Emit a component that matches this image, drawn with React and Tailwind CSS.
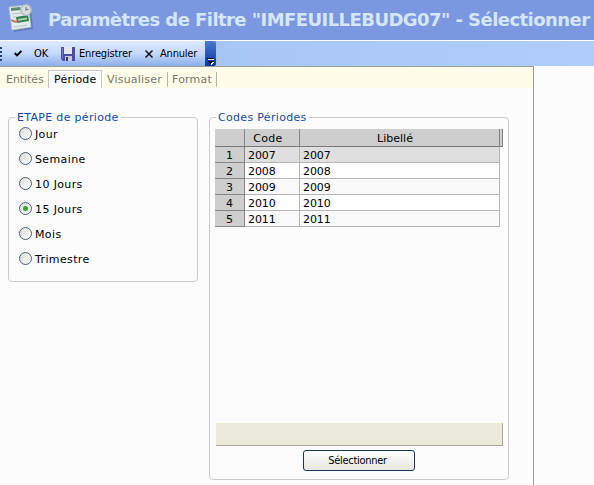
const PERIODS = ['2007', '2008', '2009', '2010', '2011'];
const STEPS = ['Jour', 'Semaine', '10 Jours', '15 Jours', 'Mois', 'Trimestre'];

function AppIcon() {
  return (
    <svg width="28" height="32" viewBox="0 0 28 32" className="ml-[7px] mt-[2px] shrink-0">
      <path d="M3 7L24 5L26 27L7 30Z" fill="#5268a5" opacity="0.6" />
      <path d="M2 5L21 3L24 25L5 28Z" fill="#e4eee8" stroke="#b5c4cc" strokeWidth="0.8" />
      <path d="M4 6L13 5L14 8L4 9Z" fill="#5b8a78" />
      <path d="M5 12L15 11M6 15H9M6 18H9M7 25L20 23" stroke="#b2c2c4" strokeWidth="1.1" />
      <path d="M9 15L21 13L22 19L10 21Z" fill="#2f7f50" />
      <path d="M11 17L20 15.5V17.500L11 19Z" fill="#a9d4a8" />
      <path d="M4 18L8 20L12 19" fill="none" stroke="#b86c62" strokeWidth="1.4" />
      <circle cx="19" cy="8" r="5.2" fill="#d7dfe4" stroke="#b4bbc4" strokeWidth="1.5" />
      <path d="M19 5V8L21.500 7" fill="none" stroke="#69747e" strokeWidth="1.1" />
    </svg>
  );
}

function SaveIcon() {
  return (
    <svg width="14" height="14" viewBox="0 0 14 14" className="shrink-0">
      <path d="M0 0H14V14H2L0 12Z" fill="#4b4ba5" />
      <path d="M1 1H2V12H1Z" fill="#7779c9" />
      <path d="M3 0H11V7H3Z" fill="#e1e6f5" />
      <path d="M4 9H11V14H4Z" fill="#c5cbdf" />
      <path d="M5 10H7V14H5Z" fill="#343777" />
    </svg>
  );
}

function Toolbar() {
  return (
    <div className="flex h-[25px] bg-gradient-to-r from-[#a4c2f3] to-[#b0cdf9]">
      <div className="flex h-[25px] w-[205px] shrink-0 items-center bg-gradient-to-b from-[#dce9fd] via-[#c4d9fb] to-[#8caee9] font-['DejaVu_Sans_Condensed','DejaVu_Sans',sans-serif] text-[11px] text-black">
        <div className="flex w-[3px] flex-col gap-[2px]">
          <i className="h-[2px] w-[2px] bg-[#27437c]" />
          <i className="h-[2px] w-[2px] bg-[#27437c]" />
          <i className="h-[2px] w-[2px] bg-[#27437c]" />
          <i className="h-[2px] w-[2px] bg-[#27437c]" />
        </div>
        <svg width="8" height="7" viewBox="0 0 8 7" className="ml-[11px] shrink-0">
          <path d="M0.7 3L3 5.4L7.4 1" fill="none" stroke="#000" strokeWidth="1.9" />
        </svg>
        <span className="ml-[12px] w-[27px] pt-[2px] tracking-[-0.1px]">OK</span>
        <SaveIcon />
        <span className="ml-[4px] w-[66px] whitespace-nowrap pt-[2px] tracking-[-0.15px]">Enregistrer</span>
        <svg width="8" height="8" viewBox="0 0 8 8" className="mt-px shrink-0">
          <path d="M0.500 0.500L7.500 7.500M7.500 0.500L0.500 7.500" stroke="#111" strokeWidth="1.5" />
        </svg>
        <span className="ml-[7px] pt-[2px] tracking-[-0.2px]">Annuler</span>
      </div>
      <div className="flex h-[25px] w-[11px] items-end justify-center rounded-r-[2px] bg-gradient-to-b from-[#4b7bcf] to-[#07359a]">
        <svg width="7" height="8" viewBox="0 0 7 8" className="mb-[1px]" shapeRendering="crispEdges">
          <path d="M1 2H7V3H1ZM1 5H7L4 8Z" fill="#fff" />
          <path d="M0 1H6V2H0ZM0 4H6L3 7Z" fill="#000" />
        </svg>
      </div>
    </div>
  );
}

function Tabs() {
  return (
    <div className="flex h-[21px] items-start bg-[#fffde9] pt-[3px] text-[11px] leading-[18px] text-[#77776d]">
      <span className="w-[48px] whitespace-nowrap pl-[6px] pt-px tracking-[-0.05px]">Entités</span>
      <span className="h-[18px] w-[54px] whitespace-nowrap border border-b-0 border-[#c8c8c0] bg-[#fcfcfc] pl-[5px] text-black leading-[17px] tracking-[0.2px]">Période</span>
      <span className="w-[65px] whitespace-nowrap pl-[5px] pt-px tracking-[0.2px]">Visualiser</span>
      <span className="mt-[2px] h-[15px] w-px bg-[#b5b5a4]" />
      <span className="w-[48px] whitespace-nowrap pl-[4px] pt-px tracking-[0.2px]">Format</span>
      <span className="mt-[2px] h-[15px] w-px bg-[#b5b5a4]" />
    </div>
  );
}

function Radio({ label, checked }) {
  return (
    <label className="flex h-[25px] items-center text-[11px] leading-[14px]">
      <span className="flex h-[13px] w-[13px] items-center justify-center rounded-full border border-[#42627f] bg-gradient-to-br from-[#dcdcd5] to-white">
        {checked && <i className="h-[5px] w-[5px] rounded-full bg-[#35a335]" />}
      </span>
      <span className="ml-[3px] pt-[2px] tracking-[0.38px]">{label}</span>
    </label>
  );
}

function Group({ title, className, children }) {
  return (
    <section className={'rounded-[4px] border border-[#cbcbc8] ' + className}>
      <h2 className="-mt-[8px] ml-[6px] h-[14px] w-fit whitespace-nowrap bg-[#fcfcfc] px-[2px] text-[11px] leading-[15px] tracking-[0.32px] text-[#144a9d]">
        {title}
      </h2>
      {children}
    </section>
  );
}

function PeriodTable() {
  return (
    <div className="ml-[5px] mt-[5px] w-[288px] text-[11px] text-black">
      <div className="flex h-[18px] border-b border-[#777] bg-[#cecece] leading-[19px]">
        <span className="w-[30px] border-r border-[#858585]" />
        <span className="w-[55px] border-r border-[#858585] pr-[8px] text-center tracking-[0.3px]">Code</span>
        <span className="w-[200px] border-r border-[#858585] pr-[9px] text-center">Libellé</span>
        <span className="w-[3px] border-r border-[#858585]" />
      </div>
      {PERIODS.map((p, i) => (
        <div
          key={p}
          className={
            'flex h-4 w-[285px] leading-[17px] tracking-[-0.1px] ' +
            (i === 0 ? 'bg-[#dfdfdf]' : i % 2 ? 'bg-white' : 'bg-[#fafafa]')
          }
        >
          <span className="w-[30px] border-b border-r border-[#858585] bg-[#cecece] text-center leading-[18px]">{i + 1}</span>
          <span className="w-[55px] border-b border-r border-[#b4b4b4] pl-[3px]">{p}</span>
          <span className="w-[200px] border-b border-r border-[#b4b4b4] pl-[3px]">{p}</span>
        </div>
      ))}
    </div>
  );
}

export default function App() {
  return (
    <div className="flex h-[485px] w-[594px] flex-col overflow-hidden bg-[#fcfcfc] font-['DejaVu_Sans',sans-serif] text-black">
      <header className="flex h-10 shrink-0 bg-[#7b97e0]">
        <AppIcon />
        <h1 className="ml-[13px] whitespace-nowrap text-[18px] font-bold leading-[39px] text-[#d5e6ff] tracking-[-0.56px]">
          Paramètres de Filtre "IMFEUILLEBUDG07" - Sélectionner
        </h1>
      </header>
      <div className="shrink-0 border-t border-white">
        <Toolbar />
      </div>
      <main className="h-[419px] w-[534px] border-r border-t border-[#9d9d99]">
        <Tabs />
        <div className="flex items-start gap-[11px] pl-[8px] pt-[29px]">
          <Group title="ETAPE de période" className="h-[165px] w-[190px]">
            <div className="-mt-[3px] ml-[10px]">
              {STEPS.map((s) => (
                <Radio key={s} label={s} checked={s === '15 Jours'} />
              ))}
            </div>
          </Group>
          <Group title="Codes Périodes" className="flex h-[363px] w-[300px] flex-col">
            <PeriodTable />
            <div className="ml-[6px] mt-auto h-[23px] w-[287px] shrink-0 border-b border-r border-[#aaa99f] bg-[#ebe9d9]" />
            <button className="mb-[8px] ml-[93px] mt-[4px] h-[21px] w-[112px] shrink-0 rounded-[3px] border border-[#143a58] bg-gradient-to-b from-white to-[#e7e6df] pr-[3px] font-['DejaVu_Sans_Condensed','DejaVu_Sans',sans-serif] text-[11px] leading-[18px] tracking-[-0.3px]">
              Sélectionner
            </button>
          </Group>
        </div>
      </main>
    </div>
  );
}
